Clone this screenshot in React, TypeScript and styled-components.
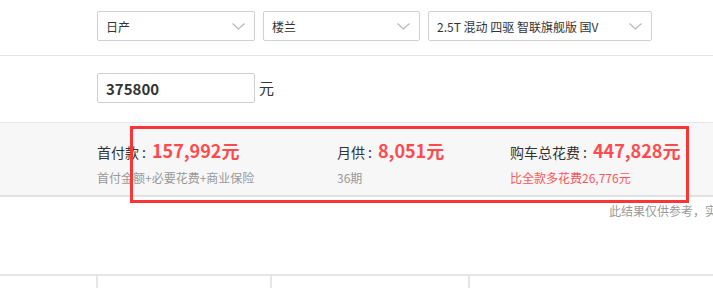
import React from "react";
import styled, { createGlobalStyle } from "styled-components";

const Global = createGlobalStyle`
  html, body { margin: 0; padding: 0; background: #fff; overflow: hidden; }
  body { font-family: "Noto Sans CJK SC", "Microsoft YaHei", sans-serif; color: #333; }
`;

const Page = styled.div`
  position: relative;
  width: 713px;
  height: 288px;
  overflow: hidden;
`;

const FormRow = styled.div<{ $h: number; $top: number; $line?: boolean }>`
  display: flex;
  align-items: flex-start;
  gap: 8px;
  height: ${(p) => p.$h}px;
  box-sizing: border-box;
  padding: ${(p) => p.$top}px 0 0 97px;
  border-bottom: ${(p) => (p.$line ? "1px solid #e3e3e3" : "none")};
`;

const Select = styled.div<{ $w: number }>`
  width: ${(p) => p.$w}px;
  height: 30px;
  box-sizing: border-box;
  border: 1px solid #d0d0d0;
  border-radius: 2px;
  display: flex;
  align-items: center;
  justify-content: space-between;
  padding: 0 9px 0 8px;
  font-size: 12px;
  color: #333;
  background: #fff;
`;

const Chevron = () => (
  <svg width="13" height="7" viewBox="0 0 13 7">
    <path d="M0.5 0.5 L6.5 6 L12.5 0.5" fill="none" stroke="#b8b8b8" strokeWidth="1.2" />
  </svg>
);

const Input = styled.div`
  width: 158px;
  height: 30px;
  box-sizing: border-box;
  border: 1px solid #d0d0d0;
  border-radius: 2px;
  display: flex;
  align-items: center;
  padding-left: 8px;
  font-size: 15px;
  font-weight: bold;
  color: #333;
`;

const Unit = styled.span`
  font-size: 15px;
  line-height: 30px;
  margin-left: -4px;
  color: #333;
`;

const Band = styled.div`
  height: 75px;
  box-sizing: border-box;
  background: #f7f7f7;
  border-top: 1px solid #e6e6e6;
  border-bottom: 2px solid #e2e2e2;
  display: grid;
  grid-template-columns: 240px 173px auto;
  padding: 14px 0 0 97px;
`;

const Item = styled.div`
  display: flex;
  flex-direction: column;
  gap: 5px;
`;

const Main = styled.div`
  display: flex;
  align-items: baseline;
  font-size: 14px;
  color: #333;
  line-height: 26px;
  white-space: nowrap;
`;

const Colon = styled.span`
  margin: 0 6px 0 3px;
`;

const Value = styled.span`
  font-size: 18px;
  font-weight: bold;
  color: #ff4a4f;
`;

const Sub = styled.div<{ $red?: boolean }>`
  font-size: 12px;
  line-height: 16px;
  color: ${(p) => (p.$red ? "#ff5459" : "#999")};
  white-space: nowrap;
`;

const Highlight = styled.div`
  position: absolute;
  left: 130px;
  top: 126px;
  width: 559px;
  height: 77px;
  box-sizing: border-box;
  border: 3px solid #fa3538;
  pointer-events: none;
`;

const Note = styled.div`
  padding: 6px 0 0 609px;
  font-size: 12px;
  line-height: 16px;
  color: #999;
  white-space: nowrap;
`;

const Table = styled.div`
  margin-top: 55px;
  border-top: 2px solid #e6e6e6;
  display: grid;
  grid-template-columns: 96px 174px 198px 300px;
  height: 20px;
`;

const Cell = styled.div<{ $first?: boolean }>`
  border-left: ${(p) => (p.$first ? "none" : "2px solid #e6e6e6")};
`;

export default function App() {
  return (
    <>
      <Global />
      <Page>
        <FormRow $h={56} $top={11} $line>
          <Select $w={158}>
            <span>日产</span>
            <Chevron />
          </Select>
          <Select $w={157}>
            <span>楼兰</span>
            <Chevron />
          </Select>
          <Select $w={224}>
            <span>2.5T 混动 四驱 智联旗舰版 国V</span>
            <Chevron />
          </Select>
        </FormRow>
        <FormRow $h={66} $top={17}>
          <Input>375800</Input>
          <Unit>元</Unit>
        </FormRow>
        <Band>
          <Item>
            <Main>
              首付款<Colon>:</Colon>
              <Value>157,992元</Value>
            </Main>
            <Sub>首付金额+必要花费+商业保险</Sub>
          </Item>
          <Item>
            <Main>
              月供<Colon>:</Colon>
              <Value>8,051元</Value>
            </Main>
            <Sub>36期</Sub>
          </Item>
          <Item>
            <Main>
              购车总花费<Colon>:</Colon>
              <Value>447,828元</Value>
            </Main>
            <Sub $red>比全款多花费26,776元</Sub>
          </Item>
        </Band>
        <Note>此结果仅供参考，实际应缴费以当地为准</Note>
        <Table>
          <Cell $first />
          <Cell />
          <Cell />
          <Cell />
        </Table>
        <Highlight />
      </Page>
    </>
  );
}
